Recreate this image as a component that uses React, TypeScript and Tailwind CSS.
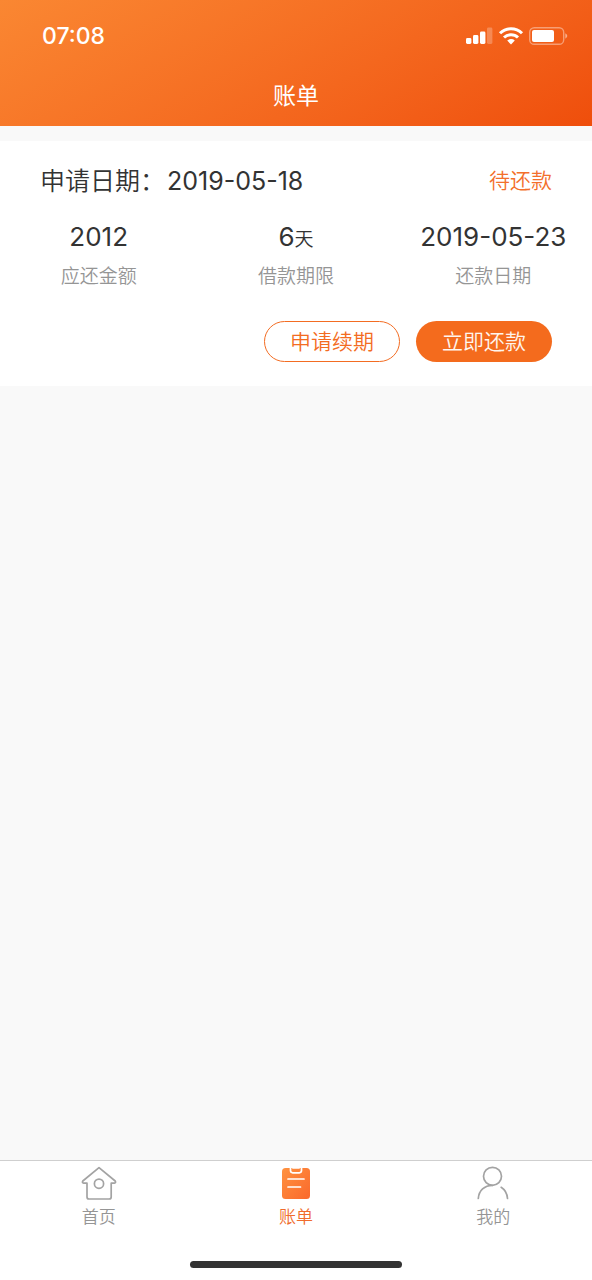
import type { ReactNode } from "react";

type Tab = { label: string; icon: ReactNode; active?: boolean }

function StatusIcons() {
    return (
        <svg className="h-5 w-[104px]" viewBox="0 0 104 20" fill="#fff" aria-hidden="true">
            {/* Signal */}
            <rect x="2" y="12" width="5.400" height="6" rx="1.400" />
            <rect x="9" y="9" width="5.400" height="9" rx="1.400" />
            <rect x="16" y="5.500" width="5.400" height="12.500" rx="1.400" />
            <rect x="23" y="1.500" width="5.400" height="16.500" rx="1.400" opacity="0.25" />
            {/* Wifi */}
            <g fill="none" stroke="#fff" strokeWidth="3">
                <path d="M36 7.200a15.600 15.600 0 0 1 22 0" />
                <path d="M40 11.500a10 10 0 0 1 14 0" />
            </g>
            <path d="M43.200 14.600a5.600 5.600 0 0 1 7.600 0L47 18.600z" />
            {/* Battery */}
            <rect x="65.700" y="1.700" width="34" height="16.600" rx="4.600" fill="none" stroke="#fff" strokeWidth="1.400" opacity="0.400" />
            <rect x="68" y="4" width="22" height="12" rx="2" />
            <path d="M101.300 7.300q4 2.700 0 5.400z" opacity="0.500" />
        </svg>
    )
}

function HomeIcon() {
    return (
        <svg className="size-9" viewBox="0 0 36 36" fill="none" stroke="#a3a3a3" strokeWidth="1.700" strokeLinejoin="round" strokeLinecap="round" aria-hidden="true">
            <path d="M18 2.600 34.200 16q1 2-.8 2.200H30.200V32q0 2-2 2H8q-2 0-2-2V18.200H2.600q-1.800-.2-.8-2.200z" />
            <circle cx="18" cy="18.700" r="4.600" />
        </svg>
    )
}

function BillIcon() {
    return (
        <svg className="size-9" viewBox="0 0 36 36" aria-hidden="true">
            <defs>
                <linearGradient id="bill" x1="0" y1="0" x2="1" y2="1">
                    <stop offset="0" stopColor="#ff9240" />
                    <stop offset="1" stopColor="#fa682c" />
                </linearGradient>
            </defs>
            <rect x="4" y="3" width="28" height="31" rx="3.500" fill="url(#bill)" />
            <g fill="none" stroke="#fff" strokeWidth="1.700" strokeLinecap="round">
                <path d="M12.500 3v2.600q0 2.200 2.200 2.200h6.600q2.200 0 2.200-2.200V3M15 3h6" />
                <path d="M10 14h16M10 22h12.500" />
            </g>
        </svg>
    )
}

function UserIcon() {
    return (
        <svg className="size-9" viewBox="0 0 36 36" fill="none" stroke="#a3a3a3" strokeWidth="1.700" strokeLinecap="round" aria-hidden="true">
            <circle cx="17.500" cy="11.300" r="9" />
            <path d="M3.300 33.500C3.800 25.500 9.500 20.300 17.500 20.300M26.200 22.300c3.800 2.500 6 6.500 6.300 11.200" />
        </svg>
    )
}

const tabs: Tab[] = [
    { label: "首页", icon: <HomeIcon /> },
    { label: "账单", icon: <BillIcon />, active: true },
    { label: "我的", icon: <UserIcon /> },
]

function Stat({ value, unit, label }: { value: string; unit?: string; label: string }) {
    return (
        <div className="flex flex-col items-center">
            <dt className="order-2 text-[19px] leading-10 font-[350] text-[#959595]">{label}</dt>
            <dd className="h-10 text-[26px] leading-10 whitespace-nowrap">
                {value}
                {unit && <span className="text-[19px] font-[350]">{unit}</span>}
            </dd>
        </div>
    )
}

function BillCard() {
    return (
        <section className="mt-[15px] bg-white pt-5 pb-6">
            <div className="flex items-center justify-between px-10">
                <h2 className="flex gap-0.5 text-[25px] leading-10">
                    <span className="font-[350]">申请日期：</span>
                    <span>2019-05-18</span>
                </h2>
                <span className="text-[21px] font-[350] text-[#f36f2b]">待还款</span>
            </div>
            <dl className="mt-4 grid grid-cols-3">
                <Stat value="2012" label="应还金额" />
                <Stat value="6" unit="天" label="借款期限" />
                <Stat value="2019-05-23" label="还款日期" />
            </dl>
            <div className="mt-6 flex justify-end gap-4 px-10 text-[21px] font-[350]">
                <button className="h-[41px] w-[136px] rounded-full border border-[#f36c22] text-[#f36c22]">申请续期</button>
                <button className="h-[41px] w-[136px] rounded-full bg-[#f46b1d] text-[#fff5ed]">立即还款</button>
            </div>
        </section>
    )
}

export default function App() {
    return (
        <div className="flex min-h-screen flex-col bg-[#f9f9f9] font-[Inter,'Noto_Sans_CJK_SC',sans-serif] text-[#333]">
            <header className="bg-linear-150 from-[#fa8732] to-[#ef4e0b] text-white">
                <div className="flex h-[72px] items-center justify-between pr-6 pl-[42px]">
                    <time className="text-[23px] font-medium">07:08</time>
                    <StatusIcons />
                </div>
                <h1 className="h-[54px] text-center text-[23px] leading-[48px]">账单</h1>
            </header>
            <main className="flex-1">
                <BillCard />
            </main>
            <footer className="border-t border-[#cfcfcf] bg-white pb-3">
                <nav className="grid grid-cols-3 pt-1">
                    {tabs.map((tab) => (
                        <a key={tab.label} href="#" className="flex flex-col items-center">
                            {tab.icon}
                            <span className={tab.active ? "text-[17px] leading-8 font-[350] text-[#f06c2c]" : "text-[17px] leading-8 font-[350] text-[#959595]"}>{tab.label}</span>
                        </a>
                    ))}
                </nav>
                <div className="mx-auto mt-7 h-[7px] w-[212px] rounded-full bg-[#333]" />
            </footer>
        </div>
    )
}
